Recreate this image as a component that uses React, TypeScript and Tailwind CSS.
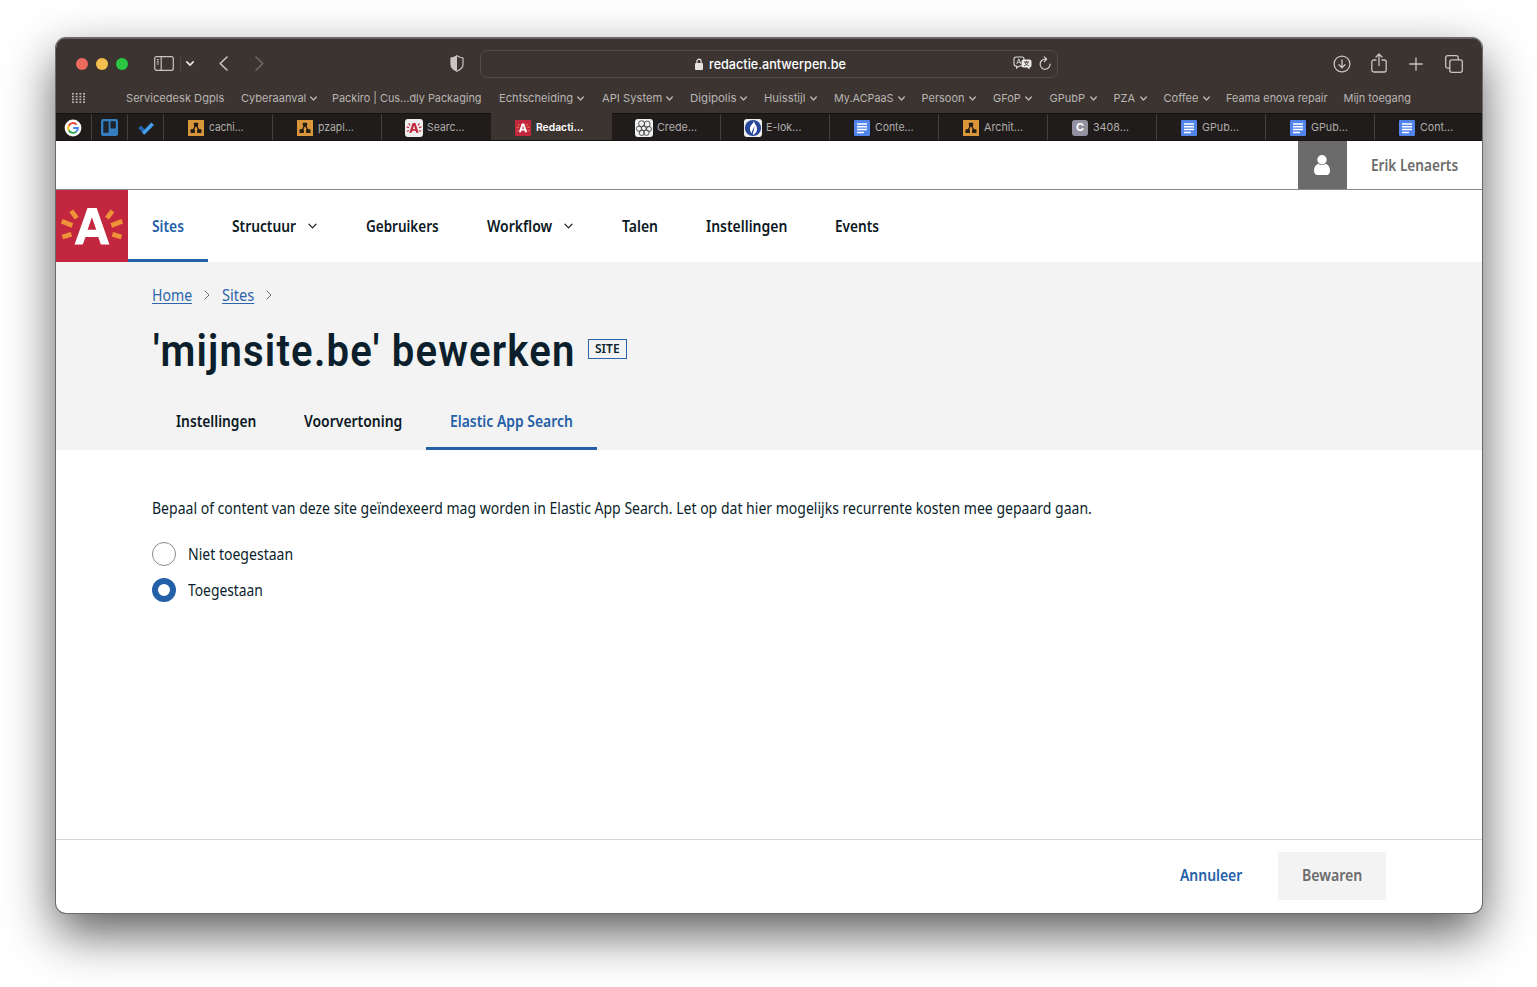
import { useLayoutEffect, useRef, useState, type ReactNode } from "react";

/** Sets a single line of text to the width of its box by condensing or widening it. */
function FitText({ className, children }: { className: string; children: ReactNode }) {
  const box = useRef<HTMLSpanElement>(null);
  const text = useRef<HTMLSpanElement>(null);
  const [scale, setScale] = useState(1);
  useLayoutEffect(() => {
    if (box.current && text.current) {
      setScale(box.current.offsetWidth / text.current.offsetWidth);
    }
  }, []);
  return (
    <span ref={box} className={`inline-flex shrink-0 justify-start ${className}`}>
      <span
        ref={text}
        className="inline-block w-max shrink-0 origin-left whitespace-nowrap"
        style={{ transform: `scaleX(${scale})` }}
      >
        {children}
      </span>
    </span>
  );
}

function ChevronDown({ className }: { className: string }) {
  return (
    <svg viewBox="0 0 10 6" className={className} fill="none" stroke="currentColor" strokeLinecap="round" strokeLinejoin="round">
      <path d="M1 1l4 4 4-4" />
    </svg>
  );
}

function ChevronRight({ className }: { className: string }) {
  return (
    <svg viewBox="0 0 6 10" className={className} fill="none" stroke="currentColor" strokeLinecap="round" strokeLinejoin="round">
      <path d="M1 1l4 4-4 4" />
    </svg>
  );
}

function Rays() {
  return (
    <g stroke="#ef9338" strokeWidth="4.8">
      <path d="M15.3 20.8l5.4 7.4M5.8 31.2l10.6 4.2M6.400 47l9-2.800" />
      <path d="M56.4 20.8L51 28.2M66.2 31.2l-10.9 4.2M65.400 47l-9-2.800" />
    </g>
  );
}

function AntwerpLogo() {
  return (
    <svg viewBox="0 0 72 72" className="h-18 w-18 shrink-0 bg-[#c2273f]">
      <Rays />
      <path fill="#fff" fillRule="evenodd" d="M31.500 18h9.200l12.700 36.500h-8.500l-2.700-7.500H29.500l-2.700 7.500h-8.200zM35.900 27.200l-4.300 12.500h8.700z" />
    </svg>
  );
}

function SmallAntwerp({ dark }: { dark: boolean }) {
  return (
    <svg viewBox="0 0 18 18" className={dark ? "h-4 w-4" : "h-[18px] w-[18px]"}>
      <rect width="18" height="18" rx={dark ? 0 : 3} fill={dark ? "#c2273f" : "#f0eeee"} />
      <g stroke={dark ? "#ef8a4a" : "#c2273f"} strokeWidth="1.1">
        <path d="M3.6 4.4L5 6.3M1.6 7.9l2.5.7M1.8 12.2l2.1-.7M14.4 4.4L13 6.3M16.4 7.9l-2.5.7M16.2 12.2l-2.1-.7" />
      </g>
      <path fill={dark ? "#fff" : "#c2273f"} fillRule="evenodd" d="M7.6 4h2.8l3.3 9.8h-2.5l-.6-2H7.3l-.6 2H4.3zM9 6.4L7.9 9.9h2.2z" />
    </svg>
  );
}

function DiagramIcon() {
  return (
    <svg viewBox="0 0 16 16" className="h-4 w-4">
      <rect width="16" height="16" fill="#d9963a" />
      <path d="M8 5L4.5 11M8 5l3.5 6" stroke="#231d16" strokeWidth="1.3" />
      <rect x="5.9" y="2.8" width="4.2" height="3.800" rx=".5" fill="#231d16" />
      <rect x="2.500" y="9.200" width="4.400" height="3.800" rx=".5" fill="#231d16" />
      <rect x="9.100" y="9.200" width="4.400" height="3.800" rx=".5" fill="#231d16" />
    </svg>
  );
}

function DocsIcon() {
  return (
    <svg viewBox="0 0 16 16" className="h-4 w-4">
      <rect width="16" height="16" rx="1.2" fill="#5285ec" />
      <path d="M3 4h10M3 6.8h10M3 9.6h10M3 12.4h7" stroke="#fff" strokeWidth="1.5" />
    </svg>
  );
}

function CredentialIcon() {
  return (
    <svg viewBox="0 0 18 18" className="h-[18px] w-[18px]">
      <rect width="18" height="18" rx="3" fill="#f1f0f0" />
      <g fill="none" stroke="#444" strokeWidth=".9">
        <circle cx="6.600" cy="4.700" r="3" />
        <circle cx="12.100" cy="5.100" r="3" />
        <circle cx="4" cy="9.7" r="2.6" />
        <circle cx="8.800" cy="9.3" r="2.4" />
        <circle cx="14" cy="10" r="2.500" />
        <circle cx="6.8" cy="13.9" r="2.6" />
        <circle cx="11.400" cy="13.700" r="2.7" />
      </g>
    </svg>
  );
}

function PoliceIcon() {
  return (
    <svg viewBox="0 0 18 18" className="h-[18px] w-[18px]">
      <rect width="18" height="18" rx="3" fill="#f1f0f0" />
      <circle cx="9" cy="9" r="8.1" fill="#27479a" />
      <path fill="#fff" d="M9.7 1.8c.5 2.6-3.8 4.2-3.8 8 0 2.1 1 3.700 2.2 4.600-.7-3.300 2-4.400 1.900-7.200 1.200 1.500-.9 4.400-1.100 8.800 2.400-1 4.100-3.200 4.100-6 0-3.300-2.300-4.600-3.300-8.200z" />
    </svg>
  );
}

function LetterIcon() {
  return (
    <span className="flex h-4 w-4 items-center justify-center rounded-[3px] bg-[#9391a0] text-[11px] font-bold text-white">C</span>
  );
}

function GoogleIcon() {
  return (
    <svg viewBox="0 0 18 18" className="h-[18px] w-[18px]">
      <circle cx="9" cy="9" r="8.4" fill="#fff" />
      <g fill="none" strokeWidth="1.9">
        <path stroke="#ea4335" d="M12.6 5.6A4.9 4.9 0 0 0 4.7 6.7" />
        <path stroke="#fbbc05" d="M4.7 6.7a4.9 4.9 0 0 0 0 4.6" />
        <path stroke="#34a853" d="M4.7 11.3a4.9 4.9 0 0 0 7.5 1.4" />
        <path stroke="#4285f4" d="M12.2 12.7A4.9 4.9 0 0 0 13.9 9H9.2" />
      </g>
    </svg>
  );
}

function BoardIcon() {
  return (
    <svg viewBox="0 0 16 16" className="h-[17px] w-[17px]">
      <rect width="16" height="16" rx="2" fill="#347dbf" />
      <rect x="2.2" y="2.2" width="5" height="10.8" rx=".8" fill="#1d222b" />
      <rect x="8.9" y="2.2" width="5" height="6.8" rx=".8" fill="#1d222b" />
    </svg>
  );
}

function TodoIcon() {
  return (
    <svg viewBox="0 0 16 14" className="h-[14px] w-4">
      <path d="M.3 7.2L2.9 4.6l4 4-2.6 2.6z" fill="#2463b5" />
      <path d="M3.9 11.2l9.5-9.8L16 4l-9.1 9.2a1 1 0 0 1-1.3 0z" fill="#459df0" />
    </svg>
  );
}

const bookmarks = [
  { label: "Servicedesk Dgpls", menu: false, space: "ml-[41px]", width: "w-[98px]" },
  { label: "Cyberaanval", menu: true, space: "ml-[17px]", width: "w-[65px]" },
  { label: "Packiro | Cus…dly Packaging", menu: false, space: "ml-[15px]", width: "w-[150px]" },
  { label: "Echtscheiding", menu: true, space: "ml-[17px]", width: "w-[74px]" },
  { label: "API System", menu: true, space: "ml-[17.5px]", width: "w-[60px]" },
  { label: "Digipolis", menu: true, space: "ml-[17px]", width: "w-[46px]" },
  { label: "Huisstijl", menu: true, space: "ml-[17px]", width: "w-[42px]" },
  { label: "My.ACPaaS", menu: true, space: "ml-[17px]", width: "w-[60px]" },
  { label: "Persoon", menu: true, space: "ml-[17px]", width: "w-[43px]" },
  { label: "GFoP", menu: true, space: "ml-[17.5px]", width: "w-[28px]" },
  { label: "GPubP", menu: true, space: "ml-[17.5px]", width: "w-[36px]" },
  { label: "PZA", menu: true, space: "ml-[17px]", width: "w-[22px]" },
  { label: "Coffee", menu: true, space: "ml-[17px]", width: "w-[35px]" },
  { label: "Feama enova repair", menu: false, space: "ml-[16px]", width: "w-[102px]" },
  { label: "Mijn toegang", menu: false, space: "ml-4", width: "w-[68px]" },
];

const tabs = [
  { label: "cachi…", icon: <DiagramIcon />, width: "w-[35px]", pad: "pl-6 gap-[5px]" },
  { label: "pzapl…", icon: <DiagramIcon />, width: "w-[36px]", pad: "pl-6 gap-[5px]" },
  { label: "Searc…", icon: <SmallAntwerp dark={false} />, width: "w-[38px]", pad: "pl-[23px] gap-1" },
  { label: "Redacti…", icon: <SmallAntwerp dark />, width: "w-[47px]", pad: "pl-6 gap-[5px]" },
  { label: "Crede…", icon: <CredentialIcon />, width: "w-[40px]", pad: "pl-[23px] gap-1" },
  { label: "E-lok…", icon: <PoliceIcon />, width: "w-[35px]", pad: "pl-[23px] gap-1" },
  { label: "Conte…", icon: <DocsIcon />, width: "w-[39px]", pad: "pl-6 gap-[5px]" },
  { label: "Archit…", icon: <DiagramIcon />, width: "w-[39px]", pad: "pl-6 gap-[5px]" },
  { label: "3408…", icon: <LetterIcon />, width: "w-[36px]", pad: "pl-6 gap-[5px]" },
  { label: "GPub…", icon: <DocsIcon />, width: "w-[37px]", pad: "pl-6 gap-[5px]" },
  { label: "GPub…", icon: <DocsIcon />, width: "w-[37px]", pad: "pl-6 gap-[5px]" },
  { label: "Cont…", icon: <DocsIcon />, width: "w-[33px]", pad: "pl-6 gap-[5px]" },
];

function Toolbar() {
  return (
    <div className="flex h-[51px] items-center pl-5 text-[#c9c5c3]">
      <div className="flex gap-2">
        <span className="h-3 w-3 rounded-full bg-[#ed6a5e]" />
        <span className="h-3 w-3 rounded-full bg-[#f5bf4f]" />
        <span className="h-3 w-3 rounded-full bg-[#2ac840]" />
      </div>
      <svg viewBox="0 0 20 15" className="ml-[26px] h-[15px] w-5" fill="none" stroke="currentColor" strokeWidth="1.2">
        <rect x=".7" y=".7" width="18.6" height="13.6" rx="2" />
        <path d="M7.2 .7v13.6M2.8 3.6h2M2.8 5.8h2M2.8 8h2" />
      </svg>
      <span className="ml-1.5 h-4 w-px bg-[#4a4442]" />
      <ChevronDown className="ml-[5px] h-[5px] w-2 stroke-2 text-[#e9e7e6]" />
      <svg viewBox="0 0 9 15" className="ml-[25px] h-[15px] w-[9px]" fill="none" stroke="currentColor" strokeWidth="1.6" strokeLinecap="round" strokeLinejoin="round">
        <path d="M8 1L1.2 7.5 8 14" />
      </svg>
      <svg viewBox="0 0 9 15" className="ml-[27px] h-[15px] w-[9px] text-[#6f6967]" fill="none" stroke="currentColor" strokeWidth="1.5" strokeLinecap="round" strokeLinejoin="round">
        <path d="M1 1l6.8 6.5L1 14" />
      </svg>
      <svg viewBox="0 0 14 17" className="ml-[186px] h-[17px] w-[14px]">
        <path d="M7 .8C5 2.2 3 2.8 1 3v6.5c0 3 2.7 5.2 6 6.7z" fill="currentColor" />
        <path d="M7 .8C9 2.2 11 2.8 13 3v6.5c0 3-2.7 5.2-6 6.7-3.3-1.500-6-3.700-6-6.700V3C3 2.800 5 2.200 7 .8z" fill="none" stroke="currentColor" strokeWidth="1.2" />
      </svg>
      <div className="ml-4 flex h-7 w-[578px] items-center rounded-[7px] border border-[#524c4a] pr-[6px] pl-[214px]">
        <svg viewBox="0 0 8 12" className="h-3 w-2" fill="#e4e2e1">
          <rect y="5" width="8" height="7" rx="1" />
          <path d="M1.900 5.500V3.300a2.100 2.100 0 0 1 4.200 0v2.200" fill="none" stroke="#e4e2e1" strokeWidth="1.200" />
        </svg>
        <FitText className="ml-1.5 w-[137px] pt-[2px] text-[13px] font-medium text-white">redactie.antwerpen.be</FitText>
        <svg viewBox="0 0 19 14" className="mb-px ml-auto h-[14px] w-[19px]">
          <path d="M3 1h6a2 2 0 0 1 2 2v5a2 2 0 0 1-2 2H6l-2.500 2v-2H3a2 2 0 0 1-2-2V3a2 2 0 0 1 2-2z" fill="none" stroke="#dedbd9" strokeWidth="1.100" />
          <path d="M3.700 8L5.800 2.800 7.900 8M4.400 6.300h2.800" fill="none" stroke="#dedbd9" strokeWidth=".9" />
          <path d="M10.500 3.500h6a2 2 0 0 1 2 2v4a2 2 0 0 1-2 2v2l-2.500-2h-3.500a2 2 0 0 1-2-2v-4a2 2 0 0 1 2-2z" fill="#ebe9e8" />
          <path d="M11 6h5M13.500 5v1M15 6.200c-.5 1.800-2 2.900-3.700 3.500M12 6.200c.5 1.800 2 2.900 3.700 3.500" fill="none" stroke="#3b3431" strokeWidth=".9" />
        </svg>
        <svg viewBox="0 0 12 14" className="mb-px ml-[7px] h-[14px] w-3" fill="none" stroke="#dedbd9" strokeWidth="1.100" strokeLinecap="round" strokeLinejoin="round">
          <path d="M11.100 8A5 5 0 1 1 6 3.200h1.500M5.200.8l2.500 2.400-2.500 2.500" />
        </svg>
      </div>
      <svg viewBox="0 0 18 18" className="ml-[275px] h-[18px] w-[18px]" fill="none" stroke="currentColor" strokeWidth="1.300" strokeLinecap="round" strokeLinejoin="round">
        <circle cx="9" cy="9" r="7.900" />
        <path d="M9 5v7.600M6 9.800l3 3 3-3" />
      </svg>
      <svg viewBox="0 0 16 20" className="-mt-0.5 ml-5 h-5 w-4" fill="none" stroke="currentColor" strokeWidth="1.300" strokeLinecap="round" strokeLinejoin="round">
        <path d="M5 7H2.800A2 2 0 0 0 .8 9v8a2 2 0 0 0 2 2h10.400a2 2 0 0 0 2-2V9a2 2 0 0 0-2-2H11M8 12.500V1M5 4l3-3 3 3" />
      </svg>
      <svg viewBox="0 0 14 14" className="ml-[21.500px] h-[14px] w-[14px]" fill="none" stroke="currentColor" strokeWidth="1.300" strokeLinecap="round">
        <path d="M7 .8v12.400M.8 7h12.400" />
      </svg>
      <svg viewBox="0 0 18 18" className="ml-[22px] h-[18px] w-[18px]" fill="none" stroke="currentColor" strokeWidth="1.300" strokeLinejoin="round">
        <rect x="4.800" y="4.800" width="12.500" height="12.500" rx="2" />
        <path d="M4.800 13.200H2.700a2 2 0 0 1-2-2V2.700a2 2 0 0 1 2-2h8.500a2 2 0 0 1 2 2v2.100" />
      </svg>
    </div>
  );
}

function BookmarksBar() {
  return (
    <div className="flex h-6 items-center pb-[6px] pl-4 text-[11px] leading-4 text-[#b9b5b3]">
      <svg viewBox="0 0 13 10" className="h-[10px] w-[13px]" fill="currentColor">
        {[0, 3.7, 7.4, 11.1].map((x) =>
          [0, 2.8, 5.6, 8.4].map((y) => <rect key={`${x}-${y}`} x={x} y={y} width="1.9" height="1.6" />),
        )}
      </svg>
      {bookmarks.map((item) => (
        <div key={item.label} className={`flex items-center ${item.space}`}>
          <FitText className={item.width}>{item.label}</FitText>
          {item.menu && <ChevronDown className="ml-1 h-[5px] w-[7px] stroke-[2]" />}
        </div>
      ))}
    </div>
  );
}

function TabBar() {
  return (
    <div className="flex h-7 border-t border-b border-[#151312] bg-[#1f1c1b] text-[11px] text-[#b0acaa]">
      <div className="flex w-9 items-center border-r border-[#45403e] pt-px pl-2"><GoogleIcon /></div>
      <div className="flex w-9 items-center border-r border-[#45403e] pt-px pl-[9px]"><BoardIcon /></div>
      <div className="flex w-9 items-center border-r border-[#45403e] pt-px pl-[10px]"><TodoIcon /></div>
      {tabs.map((tab, i) => {
        const active = i === 3;
        return (
          <div
            key={i}
            className={`flex items-center ${tab.pad} ${
              active ? "-mt-px w-[121px] bg-[#3b3431] pt-0.5 font-semibold text-white" : "w-[109px] pt-px last:w-auto last:grow last:border-r-0"
            } ${i === 2 || active ? "" : "border-r border-[#45403e]"}`}
          >
            {tab.icon}
            <FitText className={tab.width}>{tab.label}</FitText>
          </div>
        );
      })}
    </div>
  );
}

function UserBar() {
  return (
    <div className="flex h-[49px] justify-end border-b border-[#8a8a8a]">
      <div className="flex w-[49px] items-center justify-center bg-[#6b6b6b] pr-px">
        <svg viewBox="0 0 16 20" className="h-5 w-4" fill="#fff">
          <path d="M4.300 8.700C1.700 9.400 0 12.200 0 15.800 0 18.200 1.400 20 3.300 20h9.400c1.900 0 3.300-1.800 3.300-4.200 0-3.600-1.700-6.400-4.300-7.100A5.300 5.300 0 0 1 8 10.100a5.300 5.300 0 0 1-3.700-1.400z" />
          <circle cx="8" cy="4.700" r="4.700" />
        </svg>
      </div>
      <div className="flex w-[135px] items-center pt-px pl-6 text-[15.5px] font-semibold text-[#6b6b6b]">
        <FitText className="w-[87px]">Erik Lenaerts</FitText>
      </div>
    </div>
  );
}

const navigation = [
  { label: "Structuur", width: "w-[64px]", menu: true },
  { label: "Gebruikers", width: "w-[73px]", menu: false },
  { label: "Workflow", width: "w-[65px]", menu: true },
  { label: "Talen", width: "w-[36px]", menu: false },
  { label: "Instellingen", width: "w-[81px]", menu: false },
  { label: "Events", width: "w-[44px]", menu: false },
];

function Navigation() {
  return (
    <nav className="flex h-18 text-[15.5px] font-semibold text-[#0b1823]">
      <AntwerpLogo />
      <div className="flex items-center border-b-3 border-[#2460a7] px-6 pt-[5px] text-[#2460a7]">
        <FitText className="w-8">Sites</FitText>
      </div>
      {navigation.map((item) => (
        <div key={item.label} className="flex items-center px-6">
          <FitText className={`pt-0.5 ${item.width}`}>{item.label}</FitText>
          {item.menu && <ChevronDown className="mr-px ml-3 h-[6px] w-[9px] stroke-[1.3]" />}
        </div>
      ))}
    </nav>
  );
}

function PageHeader() {
  return (
    <header className="h-[188px] bg-[#f3f3f3] pt-[22px] pl-24 text-[#0b1f2c]">
      <div className="flex h-6 items-center text-[15.5px] text-[#2d66ac]">
        <a><FitText className="w-[39.5px] underline underline-offset-2">Home</FitText></a>
        <ChevronRight className="mb-0.5 ml-3 h-[10px] w-[6px] text-[#6f6f6f]" />
        <a><FitText className="ml-3 w-8 underline underline-offset-2">Sites</FitText></a>
        <ChevronRight className="mb-0.5 ml-3 h-[10px] w-[6px] text-[#6f6f6f]" />
      </div>
      <div className="mt-[11px] flex h-15 items-center">
        <h1 className="pt-[3px] pl-px font-[Roboto,sans-serif] text-[45px] leading-[60px] font-semibold tracking-[0.03em]">
          <FitText className="w-[423px]">'mijnsite.be' bewerken</FitText>
        </h1>
        <span className="ml-3 flex h-5 w-[39px] items-center justify-center border border-[#2d66ac] pt-px text-[12.5px] font-semibold">
          <FitText className="w-[25px]">SITE</FitText>
        </span>
      </div>
      <div className="mt-[13px] flex h-[58px] text-[15.5px] font-semibold text-[#0b1823]">
        <div className="flex items-center px-6 pt-px"><FitText className="w-20">Instellingen</FitText></div>
        <div className="flex items-center px-6 pt-px"><FitText className="w-[98px]">Voorvertoning</FitText></div>
        <div className="flex items-center border-b-3 border-[#2460a7] px-6 pt-1 text-[#2460a7]">
          <FitText className="w-[123px]">Elastic App Search</FitText>
        </div>
      </div>
    </header>
  );
}

export default function App() {
  return (
    <div className="h-[987px] w-[1537px] overflow-hidden bg-white pt-[38px] pl-14 font-['Noto_Sans',sans-serif]">
      <div className="flex h-[875px] w-[1426px] flex-col overflow-hidden rounded-[10px] bg-white shadow-[0_0_0_1px_#6a6a6a,0_20px_50px_rgba(0,0,0,0.65)]">
        <div className="bg-[#3b3431] font-[Inter,sans-serif] shadow-[inset_0_1px_0_#67615f]">
          <Toolbar />
          <BookmarksBar />
          <TabBar />
        </div>
        <UserBar />
        <Navigation />
        <PageHeader />
        <main className="flex grow flex-col pt-[46px] pl-24 text-[15.5px] leading-6 text-[#0b1f2c]">
          <FitText className="w-[940px]">
            Bepaal of content van deze site geïndexeerd mag worden in Elastic App Search. Let op dat hier mogelijks recurrente kosten mee gepaard gaan.
          </FitText>
          <label className="mt-[22px] flex items-center gap-3">
            <span className="h-6 w-6 rounded-full border border-[#8a8a8a]" />
            <FitText className="w-[105px]">Niet toegestaan</FitText>
          </label>
          <label className="mt-3 flex items-center gap-3">
            <span className="h-6 w-6 rounded-full border-6 border-[#2460a7]" />
            <FitText className="w-[75px]">Toegestaan</FitText>
          </label>
        </main>
        <footer className="flex h-[74px] shrink-0 items-center justify-end border-t border-[#d5d5d5] pr-24 pb-0.5 text-[15.5px] font-semibold">
          <button className="mr-9 text-[#2460a7]"><FitText className="w-[62px]">Annuleer</FitText></button>
          <button className="flex h-12 w-[108px] items-center justify-center bg-[#f3f3f3] text-[#6b6b6b]">
            <FitText className="w-[60px]">Bewaren</FitText>
          </button>
        </footer>
      </div>
    </div>
  );
}
